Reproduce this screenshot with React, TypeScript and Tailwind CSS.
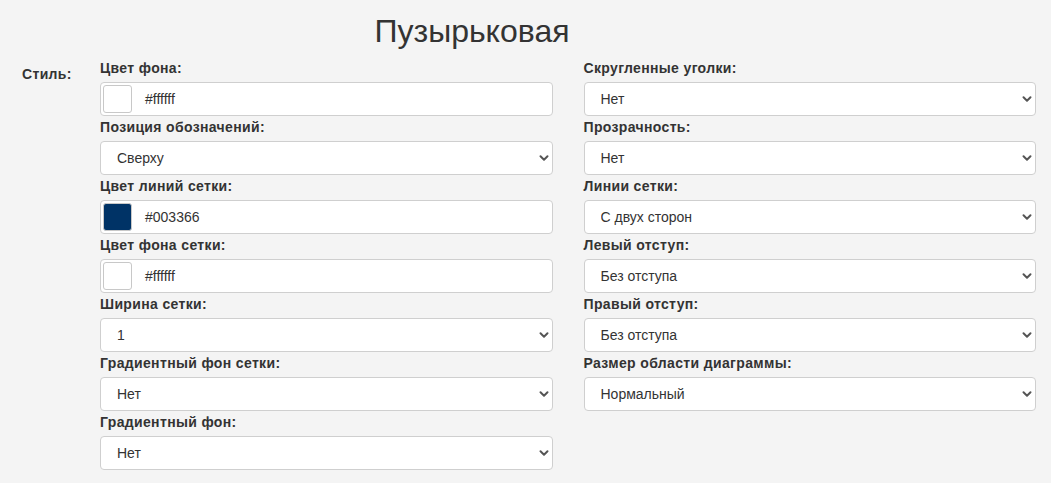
import React from 'react';

type Field =
  | { kind: 'color'; label: string; value: string }
  | { kind: 'select'; label: string; value: string };

const leftFields: Field[] = [
  { kind: 'color', label: 'Цвет фона:', value: '#ffffff' },
  { kind: 'select', label: 'Позиция обозначений:', value: 'Сверху' },
  { kind: 'color', label: 'Цвет линий сетки:', value: '#003366' },
  { kind: 'color', label: 'Цвет фона сетки:', value: '#ffffff' },
  { kind: 'select', label: 'Ширина сетки:', value: '1' },
  { kind: 'select', label: 'Градиентный фон сетки:', value: 'Нет' },
  { kind: 'select', label: 'Градиентный фон:', value: 'Нет' },
];

const rightFields: Field[] = [
  { kind: 'select', label: 'Скругленные уголки:', value: 'Нет' },
  { kind: 'select', label: 'Прозрачность:', value: 'Нет' },
  { kind: 'select', label: 'Линии сетки:', value: 'С двух сторон' },
  { kind: 'select', label: 'Левый отступ:', value: 'Без отступа' },
  { kind: 'select', label: 'Правый отступ:', value: 'Без отступа' },
  { kind: 'select', label: 'Размер области диаграммы:', value: 'Нормальный' },
];

function Chevron() {
  return (
    <svg
      className="pointer-events-none absolute right-[4px] top-1/2 -translate-y-1/2"
      width="10"
      height="7"
      viewBox="0 0 10 7"
      fill="none"
    >
      <path d="M1.5 1.8 L5 5.2 L8.5 1.8" stroke="#555" strokeWidth="2" strokeLinecap="round" strokeLinejoin="round" />
    </svg>
  );
}

function FieldRow({ field }: { field: Field }) {
  return (
    <div className="mb-[2px]">
      <div className="mb-[5px] h-[18px] text-[14px] font-bold leading-[18px] tracking-[0.35px] text-[#333]">
        {field.label}
      </div>
      {field.kind === 'color' ? (
        <div className="flex h-[34px] items-center rounded-[4px] border border-[#cfcfcf] bg-white pl-[2px]">
          <div
            className="h-[28px] w-[29px] rounded-[3px] border border-[#c8c8c8]"
            style={{ backgroundColor: field.value }}
          />
          <span className="ml-[13px] text-[14px] text-[#333]">{field.value}</span>
        </div>
      ) : (
        <div className="relative h-[34px]">
          <select
            defaultValue={field.value}
            className="h-full w-full appearance-none rounded-[4px] border border-[#cfcfcf] bg-white pl-[16px] text-[14px] text-[#333] outline-none"
          >
            <option>{field.value}</option>
          </select>
          <Chevron />
        </div>
      )}
    </div>
  );
}

export default function App() {
  return (
    <div
      className="min-h-[483px] w-full bg-[#f4f4f4] pt-[13px] text-[#333]"
      style={{ fontFamily: '"Liberation Sans", Arial, sans-serif' }}
    >
      <h1 className="mb-[10px] w-[944px] text-center text-[32px] leading-[36px] font-normal text-[#333]">
        Пузырьковая
      </h1>
      <div className="flex pr-[15px]">
        <div className="w-[100px] shrink-0 pl-[22px] pt-[6px] text-[14px] font-bold leading-[18px] tracking-[0.35px]">
          Стиль:
        </div>
        <div className="grid flex-1 grid-cols-2 gap-x-[31px]">
          <div>
            {leftFields.map((f) => (
              <FieldRow key={f.label} field={f} />
            ))}
          </div>
          <div>
            {rightFields.map((f) => (
              <FieldRow key={f.label} field={f} />
            ))}
          </div>
        </div>
      </div>
    </div>
  );
}
